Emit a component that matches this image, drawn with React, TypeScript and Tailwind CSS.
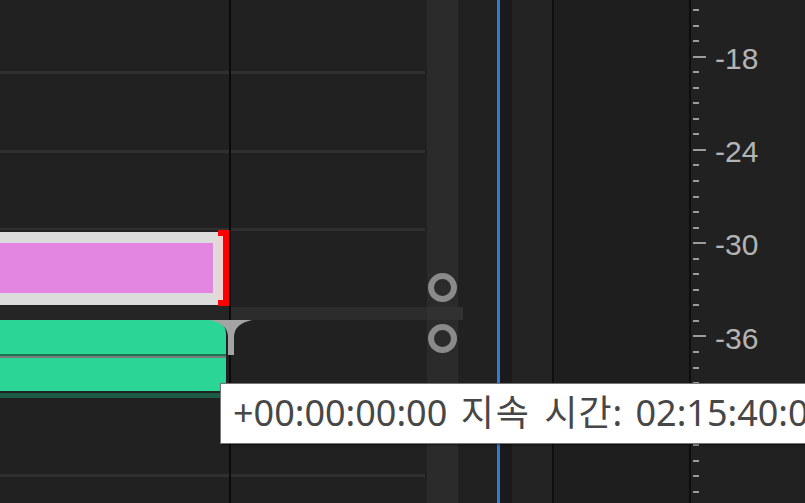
const ticks = Array.from({ length: 32 }, (_, i) => i);
const labels = ["-18", "-24", "-30", "-36"];

function Ring() {
  return <div className="mx-auto size-[29px] shrink-0 rounded-full border-[6px] border-[#8a8a8a]" />;
}

function Marker() {
  return (
    <svg width="42" height="36" viewBox="0 0 42 36" className="absolute left-[210px] top-[320px]">
      <path d="M0 0 H42 Q24 4 24 17 V35 H18 V17 Q18 4 0 0 Z" fill="#a4a4a4" />
    </svg>
  );
}

export default function App() {
  return (
    <div className="relative flex h-[503px] w-[805px] overflow-hidden bg-[#212121]">
      {/* tracks left of the edit line */}
      <div className="flex w-[229px] shrink-0 flex-col">
        <div className="h-[71px] shrink-0" />
        <div className="h-[3px] shrink-0 bg-[#2f2f2f]" />
        <div className="h-[76px] shrink-0" />
        <div className="h-[3px] shrink-0 bg-[#2f2f2f]" />
        <div className="h-[75px] shrink-0" />
        <div className="h-[2px] shrink-0 bg-[#2f2f2f]" />
        <div className="flex h-[76px] shrink-0">
          <div className="mt-[2px] h-[73px] flex-1 border-t-[11px] border-b-[12px] border-r-[5px] border-[#dcdcdc] bg-[#e286e2]" />
          <div className="h-[76px] w-[11px] border-y-[6px] border-r-[6px] border-[#ff0000] bg-[#efd3d3]" />
        </div>
        <div className="h-[14px] shrink-0 bg-[#252525]" />
        <div className="mr-[3px] h-[34px] shrink-0 rounded-tr-[14px] bg-[#2ad596]" />
        <div className="mr-[3px] h-[2px] shrink-0 bg-[#17754f]" />
        <div className="mr-[3px] h-[2px] shrink-0 bg-[#7a7a7a]" />
        <div className="mr-[3px] h-[33px] shrink-0 bg-[#2ad596]" />
        <div className="h-[2px] shrink-0" />
        <div className="mr-[3px] h-[5px] shrink-0 bg-[#1d5a43]" />
        <div className="h-[76px] shrink-0" />
        <div className="h-[3px] shrink-0 bg-[#2f2f2f]" />
      </div>

      <div className="w-[2px] shrink-0 bg-[#0b0b0b]" />

      {/* tracks right of the edit line */}
      <div className="flex w-[196px] shrink-0 flex-col">
        <div className="h-[71px] shrink-0" />
        <div className="mr-[2px] h-[3px] shrink-0 bg-[#2f2f2f]" />
        <div className="h-[76px] shrink-0" />
        <div className="mr-[2px] h-[3px] shrink-0 bg-[#2f2f2f]" />
        <div className="h-[75px] shrink-0" />
        <div className="mr-[2px] h-[3px] shrink-0 bg-[#2f2f2f]" />
        <div className="h-[76px] shrink-0" />
        <div className="h-[13px] shrink-0 bg-[#2c2c2c]" />
        <div className="h-[154px] shrink-0" />
        <div className="mr-[2px] h-[3px] shrink-0 bg-[#2f2f2f]" />
      </div>

      {/* scroll strip */}
      <div className="flex w-[31px] shrink-0 flex-col bg-[#2b2b2b]">
        <div className="h-[273px] shrink-0" />
        <Ring />
        <div className="h-[5px] shrink-0" />
        <div className="h-[13px] shrink-0 bg-[#313131]" />
        <div className="h-[4px] shrink-0" />
        <Ring />
      </div>
      <div className="w-[39px] shrink-0">
        <div className="h-[307px]" />
        <div className="h-[13px] w-[5px] bg-[#313131]" />
      </div>

      <div className="w-[3px] shrink-0 bg-[#2b7dd5]" />
      <div className="w-[12px] shrink-0 bg-[#1a1a1a]" />
      <div className="w-[40px] shrink-0 bg-[#232323]" />
      <div className="w-[2px] shrink-0 bg-[#0f0f0f]" />
      <div className="w-[135px] shrink-0 bg-[#1e1e1e]" />
      <div className="w-[2px] shrink-0 bg-[#0d0d0d]" />

      {/* meter scale */}
      <div className="flex flex-1 pl-[2px]">
        <div className="flex w-[14px] flex-col pt-[9px]">
          {ticks.map((i) => (
            <div key={i} className="h-[15.55px] shrink-0">
              <div className={`h-[2px] bg-[#9c9c9c] ${i % 6 === 3 ? "w-[13px]" : "w-[6px]"}`} />
            </div>
          ))}
        </div>
        <div className="ml-[8px] flex flex-col pt-[12px] font-['Liberation_Sans',Arial,sans-serif] text-[30px] leading-none text-[#b4b4b4]">
          {labels.map((l) => (
            <div key={l} className="flex h-[93.3px] shrink-0 items-center">
              {l}
            </div>
          ))}
        </div>
      </div>

      <Marker />

      <div className="absolute left-[220px] top-[383px] h-[61px] w-[700px] whitespace-pre border border-[#767676] bg-white pl-[12px] font-['Noto_Sans','Noto_Sans_CJK_KR',sans-serif] text-[36px] leading-[58px] text-[#474747] shadow-[1px_1px_2px_rgba(0,0,0,0.45)] [word-spacing:4px]">
        <span>
          +00:00:00:00 <span className="tracking-[2px]">지속</span> <span className="tracking-[1px]">시간</span>: 02:15:40:00
        </span>
      </div>
    </div>
  );
}
